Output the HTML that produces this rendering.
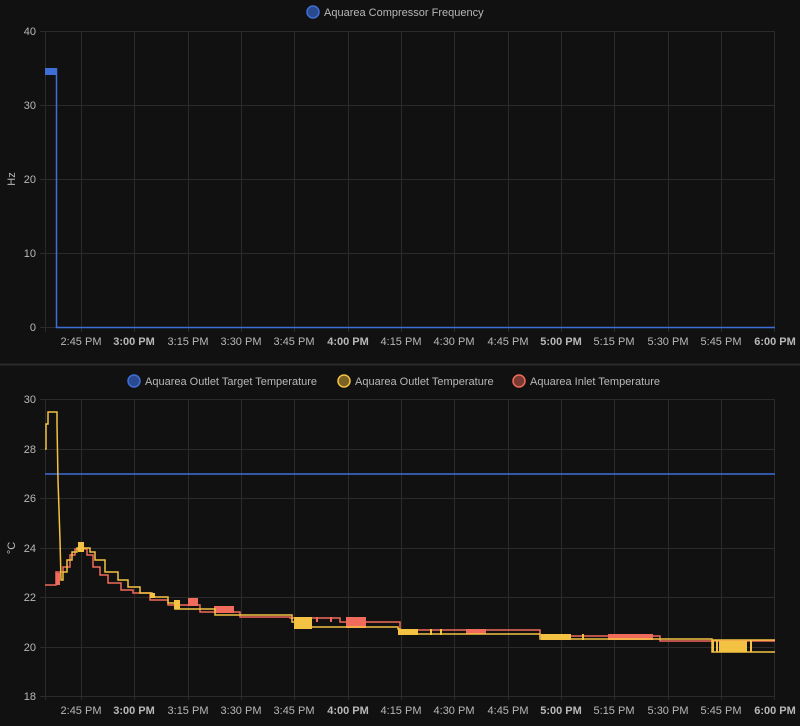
<!DOCTYPE html>
<html><head><meta charset="utf-8"><style>
body{margin:0;background:#111;width:800px;height:726px;overflow:hidden;font-family:"Liberation Sans",sans-serif}
svg{display:block}
text{font-family:"Liberation Sans",sans-serif;fill:#b8b8b8;font-size:11px}
</style></head><body>
<svg width="800" height="726" viewBox="0 0 800 726">
<rect width="800" height="726" fill="#111"/>
<circle cx="313" cy="12" r="6" fill="#2a4a8f" stroke="#3f6fd6" stroke-width="1.5"/>
<text x="324" y="16" font-size="12" fill="#c8c8c8">Aquarea Compressor Frequency</text>
<g stroke="#2b2b2b" stroke-width="1">
<line x1="40" y1="31.5" x2="775" y2="31.5"/><line x1="40" y1="105.5" x2="775" y2="105.5"/><line x1="40" y1="179.5" x2="775" y2="179.5"/><line x1="40" y1="253.5" x2="775" y2="253.5"/><line x1="40" y1="327.5" x2="775" y2="327.5"/>
<line x1="40" y1="399.5" x2="775" y2="399.5"/><line x1="40" y1="449.5" x2="775" y2="449.5"/><line x1="40" y1="498.5" x2="775" y2="498.5"/><line x1="40" y1="548.5" x2="775" y2="548.5"/><line x1="40" y1="597.5" x2="775" y2="597.5"/><line x1="40" y1="647.5" x2="775" y2="647.5"/><line x1="40" y1="696.5" x2="775" y2="696.5"/>
</g>
<g stroke="#2b2b2b" id="vg">
<line x1="45.5" y1="31" x2="45.5" y2="332"/><line x1="81.5" y1="31" x2="81.5" y2="332"/><line x1="134.5" y1="31" x2="134.5" y2="332"/><line x1="188.5" y1="31" x2="188.5" y2="332"/><line x1="241.5" y1="31" x2="241.5" y2="332"/><line x1="294.5" y1="31" x2="294.5" y2="332"/><line x1="348.5" y1="31" x2="348.5" y2="332"/><line x1="401.5" y1="31" x2="401.5" y2="332"/><line x1="454.5" y1="31" x2="454.5" y2="332"/><line x1="508.5" y1="31" x2="508.5" y2="332"/><line x1="561.5" y1="31" x2="561.5" y2="332"/><line x1="614.5" y1="31" x2="614.5" y2="332"/><line x1="668.5" y1="31" x2="668.5" y2="332"/><line x1="721.5" y1="31" x2="721.5" y2="332"/><line x1="774.5" y1="31" x2="774.5" y2="332"/>
</g>
<use href="#vg" y="368"/>
<line x1="0" y1="364.5" x2="800" y2="364.5" stroke="#2a2a2a" stroke-width="2"/>
<g text-anchor="end"><text x="36" y="35">40</text><text x="36" y="109">30</text><text x="36" y="183">20</text><text x="36" y="257">10</text><text x="36" y="331">0</text>
<text x="36" y="403">30</text><text x="36" y="453">28</text><text x="36" y="502">26</text><text x="36" y="552">24</text><text x="36" y="601">22</text><text x="36" y="651">20</text><text x="36" y="700">18</text></g>
<text transform="translate(15,179) rotate(-90)" text-anchor="middle" font-size="10">Hz</text>
<text transform="translate(15,548) rotate(-90)" text-anchor="middle" font-size="10">°C</text>
<g id="xl" text-anchor="middle">
<text x="81" y="345">2:45 PM</text><text x="134" y="345" font-weight="bold" fill="#ddd">3:00 PM</text><text x="188" y="345">3:15 PM</text><text x="241" y="345">3:30 PM</text><text x="294" y="345">3:45 PM</text><text x="348" y="345" font-weight="bold" fill="#ddd">4:00 PM</text><text x="401" y="345">4:15 PM</text><text x="454" y="345">4:30 PM</text><text x="508" y="345">4:45 PM</text><text x="561" y="345" font-weight="bold" fill="#ddd">5:00 PM</text><text x="614" y="345">5:15 PM</text><text x="668" y="345">5:30 PM</text><text x="721" y="345">5:45 PM</text><text x="775" y="345" font-weight="bold" fill="#ddd">6:00 PM</text>
</g>
<use href="#xl" y="369"/>
<rect x="45" y="68" width="12" height="7" fill="#3f6fd6"/>
<polyline points="56.5,68 56.5,327.5 775,327.5" fill="none" stroke="#3f6fd6" stroke-width="1.5"/>
<circle cx="134" cy="381" r="6" fill="#2a4a8f" stroke="#3f6fd6" stroke-width="1.5"/>
<text x="145" y="385" font-size="12" fill="#c8c8c8">Aquarea Outlet Target Temperature</text>
<circle cx="344" cy="381" r="6" fill="#7a6125" stroke="#f4c242" stroke-width="1.5"/>
<text x="355" y="385" font-size="12" fill="#c8c8c8">Aquarea Outlet Temperature</text>
<circle cx="519" cy="381" r="6" fill="#7a3a33" stroke="#f06b5b" stroke-width="1.5"/>
<text x="530" y="385" font-size="12" fill="#c8c8c8">Aquarea Inlet Temperature</text>
<line x1="45" y1="474" x2="775" y2="474" stroke="#3f6fd6" stroke-width="1.5"/>
<!-- inlet red -->
<polyline fill="none" stroke="#f06b5b" stroke-width="1.5" points="45,585 56,585 56,572 63,572 63,567 70,567 70,555 75,555 75,549 87,549 87,555 93,555 93,567 100,567 100,575 108,575 108,583 121,583 121,590 133,590 133,593 150,593 150,600 168,600 168,605 200,605 200,612 240,612 240,617 290,617 290,618 340,618 340,622 400,622 400,630 540,630 540,636 660,636 660,641 775,641"/>
<g fill="#f06b5b"><rect x="56" y="573" width="4" height="12"/><rect x="188" y="598" width="10" height="8"/><rect x="214" y="606" width="20" height="7"/><rect x="346" y="617" width="20" height="11"/><rect x="466" y="629" width="20" height="5"/><rect x="608" y="634" width="45" height="6"/><rect x="316" y="617" width="2" height="5"/><rect x="330" y="617" width="2" height="5"/></g>
<!-- outlet yellow -->
<polyline fill="none" stroke="#f4c242" stroke-width="1.5" points="45,449 46,449 46,424 48,424 48,412 57,412 57,424 58,480 60,540 61,580 63,580 63,572 67,572 67,560 72,560 72,552 77,552 77,548 90,548 90,552 95,552 95,560 105,560 105,572 118,572 118,580 128,580 128,587 140,587 140,593 152,593 152,597 168,597 168,603 175,603 175,609 215,609 215,615 292,615 292,622 310,622 310,627 398,627 398,629 400,629 400,634 540,634 540,639 712,639 712,652 775,652"/>
<polyline fill="none" stroke="#f4c242" stroke-width="1.5" points="712,640 775,640"/>
<g fill="#f4c242"><rect x="78" y="542" width="6" height="10"/><rect x="150" y="593" width="5" height="5"/><rect x="174" y="600" width="6" height="9"/><rect x="294" y="617" width="18" height="12"/><rect x="398" y="629" width="20" height="6"/><rect x="541" y="634" width="30" height="6"/><rect x="719" y="641" width="28" height="11"/><rect x="712" y="640" width="2" height="12"/><rect x="716" y="640" width="2" height="12"/><rect x="750" y="640" width="2" height="12"/><rect x="430" y="629" width="2" height="6"/><rect x="440" y="629" width="2" height="6"/><rect x="582" y="634" width="2" height="6"/></g>
</svg>
</body></html>
